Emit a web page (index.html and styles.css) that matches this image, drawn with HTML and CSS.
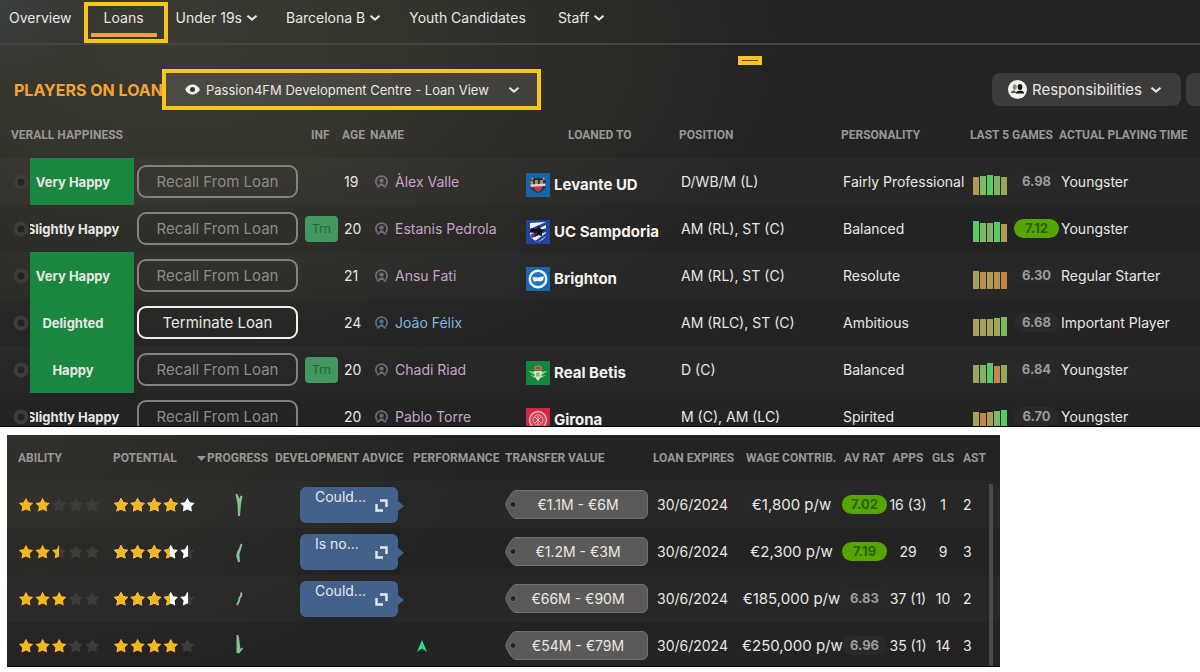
FILE: index.html
```html
<!doctype html>
<html lang="en">
<head>
  <meta charset="utf-8" />
  <meta name="viewport" content="width=device-width,initial-scale=1" />
  <title>Development Centre - Loans</title>
  <link rel="stylesheet" href="styles.css">
</head>
<body>
  <!-- shared icons -->
  <svg class="sprite" aria-hidden="true">
    <symbol id="chevron" viewBox="0 0 12 8"><path d="M1.500 1.800 6 5.600l4.500-3.800" fill="none" stroke="currentColor" stroke-width="2"/></symbol>
    <symbol id="person" viewBox="0 0 13 13"><path d="M2.400 10.500a5.600 5.600 0 1 1 8.200 0" fill="none" stroke="currentColor" stroke-width="1.800"/><circle cx="6.500" cy="5.600" r="2.200" fill="currentColor"/><path d="M1.500 12.500c.3-1.500 1-2 2.300-2.300L5 8.500h3l1.200 1.700c1.300.3 2 .8 2.300 2.300H8.800L8 11H5l-.8 1.500z" fill="currentColor"/></symbol>
    <symbol id="dot" viewBox="0 0 16 16"><circle cx="8" cy="8" r="5.500" fill="#232322" stroke="#3d3c39" stroke-width="4"/></symbol>
    <symbol id="expand" viewBox="0 0 13 13"><path d="M5 1.500h6.500V8M1.500 5v6.500H8" fill="none" stroke="currentColor" stroke-width="2.400"/></symbol>
    <symbol id="tag" viewBox="0 0 143 29"><path d="M11 .5h126a5.500 5.500 0 0 1 5.500 5.500v17a5.500 5.500 0 0 1-5.500 5.500H11C7 28.500 4 22 1.500 17.500q-1.500-3 0-6C4 7 7 .5 11 .5z" fill="#5b5a59" stroke="#737271"/><circle cx="8" cy="14.500" r="3" fill="#242424" stroke="#6e6d6c"/></symbol>
    <clipPath id="five-stars">
      <path d="M8 .8l2.400 4.400 4.800.9-3.400 3.500.7 4.900-4.500-2.100-4.500 2.100.7-4.900L.8 6.100l4.800-.9zM24.600.8l2.400 4.400 4.800.9-3.400 3.500.7 4.900-4.500-2.100-4.500 2.100.7-4.900-3.400-3.500 4.800-.9zM41.200.8l2.400 4.400 4.800.9-3.400 3.500.7 4.900-4.500-2.100-4.500 2.100.7-4.900L34 6.100l4.800-.9zM57.800.8l2.400 4.400 4.800.9-3.400 3.500.7 4.900-4.500-2.100-4.500 2.100.7-4.900-3.400-3.500 4.800-.9zM74.400.8l2.400 4.400 4.800.9-3.400 3.500.7 4.900-4.500-2.100-4.500 2.100.7-4.900-3.400-3.500 4.800-.9z"/>
    </clipPath>
  </svg>

  <section class="panel loans">
    <nav class="tabs">
      <a href="#">Overview</a>
      <a href="#" class="active">Loans</a>
      <a href="#">Under 19s <svg class="chev"><use href="#chevron"/></svg></a>
      <a href="#">Barcelona B <svg class="chev"><use href="#chevron"/></svg></a>
      <a href="#">Youth Candidates</a>
      <a href="#">Staff <svg class="chev"><use href="#chevron"/></svg></a>
    </nav>
    <span class="marker"></span>

    <header class="toolbar">
      <h1>PLAYERS ON LOAN</h1>
      <label class="view">
        <svg class="eye" viewBox="0 0 15 11" role="img" aria-label="View"><path d="M0 5.500C2 2 4.500.5 7.500.5S13 2 15 5.500C13 9 10.500 10.500 7.500 10.500S2 9 0 5.500z" fill="#f2f0ed"/><circle cx="7.500" cy="5.500" r="2.500" fill="#3a3935"/></svg>
        <select>
          <option>Passion4FM Development Centre - Loan View</option>
        </select>
        <svg class="chev bold"><use href="#chevron"/></svg>
      </label>
      <button class="pill-btn" type="button">
        <svg class="staff" viewBox="0 0 19 19"><circle cx="9.500" cy="9.500" r="9.500" fill="#f4f2ef"/><ellipse cx="6.700" cy="7" rx="2" ry="2.800" fill="#8b8987"/><path d="M2.800 13c.3-2 2-2.500 4-2.500l1.500 2.500z" fill="#55534f"/><ellipse cx="12" cy="7" rx="2.300" ry="3" fill="#171716"/><path d="M7.800 13.500c.3-2.200 2-2.700 4.200-2.700s4 .5 4.200 2.700z" fill="#171716"/></svg>
        Responsibilities
        <svg class="chev bold"><use href="#chevron"/></svg>
      </button>
      <button class="pill-btn cut" type="button" aria-label="More"></button>
    </header>

    <table>
      <colgroup>
        <col class="c-dot"><col class="c-happy"><col class="c-action"><col class="c-inf"><col class="c-age"><col class="c-name"><col class="c-club"><col class="c-pos"><col class="c-pers"><col class="c-form"><col class="c-rate"><col>
      </colgroup>
      <thead>
        <tr>
          <th colspan="3" class="first">VERALL HAPPINESS</th>
          <th class="inf">INF</th>
          <th>AGE</th>
          <th>NAME</th>
          <th class="club-head">LOANED TO</th>
          <th>POSITION</th>
          <th>PERSONALITY</th>
          <th colspan="2">LAST 5 GAMES</th>
          <th>ACTUAL PLAYING TIME</th>
        </tr>
      </thead>
      <tbody>
        <tr>
          <td class="dot"><svg><use href="#dot"/></svg></td>
          <td class="happy good"><div>Very Happy</div></td>
          <td class="action"><button type="button" disabled>Recall From Loan</button></td>
          <td></td>
          <td class="age">19</td>
          <td class="name"><a href="#"><svg><use href="#person"/></svg>Àlex Valle</a></td>
          <td class="low"><a href="#" class="club"><svg viewBox="0 0 24 24"><rect width="24" height="24" fill="#1765a8"/><path d="M4 7h16v5c0 4-4 7-8 8-4-1-8-4-8-8z" fill="#25325a"/><path d="M4 8h3v7l-2-2zM9 7h3v5H9zM14 7h3v5h-3z" fill="#b68e3a"/><path d="M7 13h10l-2 4-3 2-3-2z" fill="#c03a42"/><path d="M4.500 11.500l15-1v2.500l-15 .8z" fill="#d8d6d8"/><path d="M7 7l2-2 2 1 1-2 1 2 2-1 2 2z" fill="#222"/><path d="M5 6l2-2v3zM19 6l-2-2v3z" fill="#c99a36"/></svg>Levante UD</a></td>
          <td class="pos">D/WB/M (L)</td>
          <td class="pos">Fairly Professional</td>
          <td class="low"><div class="form"><i class="h18 amber"></i><i class="h19 lime"></i><i class="h20 green"></i><i class="h19 moss"></i><i class="h18 olive"></i></div></td>
          <td><span class="rating">6.98</span></td>
          <td class="time">Youngster</td>
        </tr>
        <tr>
          <td class="dot"><svg><use href="#dot"/></svg></td>
          <td class="happy"><div>Slightly Happy</div></td>
          <td class="action"><button type="button" disabled>Recall From Loan</button></td>
          <td><span class="trn">Trn</span></td>
          <td class="age">20</td>
          <td class="name"><a href="#"><svg><use href="#person"/></svg>Estanis Pedrola</a></td>
          <td class="low"><a href="#" class="club"><svg viewBox="0 0 24 24"><rect width="24" height="24" fill="#24449b"/><path d="M4 3l16-1v12c0 4-4 6-8 8-4-2-8-4-8-8z" fill="#f2f4f8"/><path d="M20 2v3L4 13v-4zM20 8v4L6 18l-2-3zM20 16l-8 6-3-1 11-8z" fill="#24449b"/><path d="M5 8l5 1 3-3 2 3 4 1-3 2v4l-4-1-3 2-1-4-4-1z" fill="#10131c"/><path d="M5 12l6 1v2l-5 1z" fill="#c5303c" opacity=".5"/></svg>UC Sampdoria</a></td>
          <td class="pos">AM (RL), ST (C)</td>
          <td class="pos">Balanced</td>
          <td class="low"><div class="form"><i class="h21 green"></i><i class="h19 lime"></i><i class="h19 moss"></i><i class="h20 green"></i><i class="h18 amber"></i></div></td>
          <td><span class="rating top">7.12</span></td>
          <td class="time">Youngster</td>
        </tr>
        <tr>
          <td class="dot"><svg><use href="#dot"/></svg></td>
          <td class="happy good"><div>Very Happy</div></td>
          <td class="action"><button type="button" disabled>Recall From Loan</button></td>
          <td></td>
          <td class="age">21</td>
          <td class="name"><a href="#"><svg><use href="#person"/></svg>Ansu Fati</a></td>
          <td class="low"><a href="#" class="club"><svg viewBox="0 0 24 24"><rect width="24" height="24" fill="#1b67b1"/><circle cx="12" cy="12" r="8.300" fill="#2472b8" stroke="#eef5fb" stroke-width="2.400"/><path d="M6 11c2-1.500 3.500-1 5-.5 2 .5 3-1.500 7-1l-1 3.500c-2 2-4 1.500-5 1l-4 .5c-1-.5 0-2-2-3.500z" fill="#f5f9fc"/></svg>Brighton</a></td>
          <td class="pos">AM (RL), ST (C)</td>
          <td class="pos">Resolute</td>
          <td class="low"><div class="form"><i class="h18 khaki"></i><i class="h17 orange"></i><i class="h17 amber"></i><i class="h17 orange"></i><i class="h17 rust"></i></div></td>
          <td><span class="rating">6.30</span></td>
          <td class="time">Regular Starter</td>
        </tr>
        <tr>
          <td class="dot"><svg><use href="#dot"/></svg></td>
          <td class="happy good"><div>Delighted</div></td>
          <td class="action"><button type="button">Terminate Loan</button></td>
          <td></td>
          <td class="age">24</td>
          <td class="name loanee"><a href="#"><svg><use href="#person"/></svg>João Félix</a></td>
          <td></td>
          <td class="pos">AM (RLC), ST (C)</td>
          <td class="pos">Ambitious</td>
          <td class="low"><div class="form"><i class="h17 khaki"></i><i class="h17 khaki"></i><i class="h17 khaki"></i><i class="h18 olive"></i><i class="h19 lime"></i></div></td>
          <td><span class="rating">6.68</span></td>
          <td class="time">Important Player</td>
        </tr>
        <tr>
          <td class="dot"><svg><use href="#dot"/></svg></td>
          <td class="happy good"><div>Happy</div></td>
          <td class="action"><button type="button" disabled>Recall From Loan</button></td>
          <td><span class="trn">Trn</span></td>
          <td class="age">20</td>
          <td class="name"><a href="#"><svg><use href="#person"/></svg>Chadi Riad</a></td>
          <td class="low"><a href="#" class="club"><svg viewBox="0 0 24 24"><rect width="24" height="24" fill="#13873f"/><path d="M2 10l7 1v3zM22 10l-7 1v3zM4 14l6 1-1 2zM20 14l-6 1 1 2z" fill="#a5cc8d"/><path d="M8 10h8l-1 6-3 4-3-4z" fill="#dfe8c8"/><path d="M10.500 11.500h1v4h-1zM12.500 11.500h1v4h-1z" fill="#2b8a48"/><path d="M8.500 9L8 6l2-1.500h4L16 6l-.5 3z" fill="#a4853a"/><path d="M10 6h4v2h-4z" fill="#b0433a"/></svg>Real Betis</a></td>
          <td class="pos">D (C)</td>
          <td class="pos">Balanced</td>
          <td class="low"><div class="form"><i class="h18 olive"></i><i class="h18 moss"></i><i class="h20 green"></i><i class="h17 rust"></i><i class="h18 olive"></i></div></td>
          <td><span class="rating">6.84</span></td>
          <td class="time">Youngster</td>
        </tr>
        <tr>
          <td class="dot"><svg><use href="#dot"/></svg></td>
          <td class="happy"><div>Slightly Happy</div></td>
          <td class="action"><button type="button" disabled>Recall From Loan</button></td>
          <td></td>
          <td class="age">20</td>
          <td class="name"><a href="#"><svg><use href="#person"/></svg>Pablo Torre</a></td>
          <td class="low"><a href="#" class="club"><svg viewBox="0 0 24 24"><rect width="24" height="24" fill="#cf2745"/><circle cx="12" cy="12" r="8.500" fill="#d8415a" stroke="#efb4b8" stroke-width="1.500"/><circle cx="12" cy="12" r="5" fill="#d03a52" stroke="#eaa2a8"/><path d="M9 9l6 6M12 8v8M15 9l-6 6" stroke="#f0c0c0"/></svg>Girona</a></td>
          <td class="pos">M (C), AM (LC)</td>
          <td class="pos">Spirited</td>
          <td class="low"><div class="form"><i class="h18 khaki"></i><i class="h17 rust"></i><i class="h18 amber"></i><i class="h19 lime"></i><i class="h20 green"></i></div></td>
          <td><span class="rating">6.70</span></td>
          <td class="time">Youngster</td>
        </tr>
      </tbody>
    </table>
  </section>

  <section class="panel details">
    <table>
      <colgroup>
        <col class="d-star"><col class="d-star"><col class="d-prog"><col class="d-advice"><col class="d-perf"><col class="d-value"><col class="d-exp"><col class="d-wage"><col class="d-rate"><col class="d-apps"><col class="d-gls"><col>
      </colgroup>
      <thead>
        <tr>
          <th class="first">ABILITY</th>
          <th class="first">POTENTIAL</th>
          <th><svg class="sort" viewBox="0 0 9 5"><path d="M0 0h9L4.500 5z" fill="currentColor"/></svg>PROGRESS</th>
          <th>DEVELOPMENT ADVICE</th>
          <th>PERFORMANCE</th>
          <th>TRANSFER VALUE</th>
          <th>LOAN EXPIRES</th>
          <th class="wage-head">WAGE CONTRIB.</th>
          <th class="center">AV RAT</th>
          <th class="center">APPS</th>
          <th class="center">GLS</th>
          <th class="ast">AST</th>
        </tr>
      </thead>
      <tbody>
        <tr>
          <td class="first"><svg class="stars" viewBox="0 0 83 16" role="img" aria-label="2 stars"><g clip-path="url(#five-stars)"><rect width="83" height="16" fill="#3c3c3b"/><rect width="33" height="16" fill="#f4b81d"/></g></svg></td>
          <td class="first"><svg class="stars" viewBox="0 0 83 16" role="img" aria-label="4 to 5 stars"><g clip-path="url(#five-stars)"><rect width="83" height="16" fill="#fff"/><rect width="66" height="16" fill="#f4b81d"/></g></svg></td>
          <td class="prog"><svg class="spark" viewBox="0 0 8 26"><path d="M1.500 2l2 10 .5 12 1-12 1.500-8L4 10 2.500 4"/></svg></td>
          <td><button type="button" class="advice">Could...<svg><use href="#expand"/></svg></button></td>
          <td></td>
          <td><span class="value"><svg><use href="#tag"/></svg><b>€1.1M - €6M</b></span></td>
          <td class="exp">30/6/2024</td>
          <td class="wage">€1,800 p/w</td>
          <td><span class="rating top">7.02</span></td>
          <td class="center">16 (3)</td>
          <td class="center">1</td>
          <td class="ast">2</td>
        </tr>
        <tr>
          <td class="first"><svg class="stars" viewBox="0 0 83 16" role="img" aria-label="2.5 stars"><g clip-path="url(#five-stars)"><rect width="83" height="16" fill="#3c3c3b"/><rect width="41" height="16" fill="#f4b81d"/></g></svg></td>
          <td class="first"><svg class="stars" viewBox="0 0 83 16" role="img" aria-label="3.5 to 4.5 stars"><g clip-path="url(#five-stars)"><rect width="83" height="16" fill="#3c3c3b"/><rect width="75" height="16" fill="#fff"/><rect width="57" height="16" fill="#f4b81d"/></g></svg></td>
          <td class="prog"><svg class="spark" viewBox="0 0 8 26"><path d="M6.500 5L5 9.500 3 13l-.8 4L4 23l-.5-8z"/></svg></td>
          <td><button type="button" class="advice">Is no...<svg><use href="#expand"/></svg></button></td>
          <td></td>
          <td><span class="value"><svg><use href="#tag"/></svg><b>€1.2M - €3M</b></span></td>
          <td class="exp">30/6/2024</td>
          <td class="wage">€2,300 p/w</td>
          <td><span class="rating top">7.19</span></td>
          <td class="center">29</td>
          <td class="center">9</td>
          <td class="ast">3</td>
        </tr>
        <tr>
          <td class="first"><svg class="stars" viewBox="0 0 83 16" role="img" aria-label="3 stars"><g clip-path="url(#five-stars)"><rect width="83" height="16" fill="#3c3c3b"/><rect width="49" height="16" fill="#f4b81d"/></g></svg></td>
          <td class="first"><svg class="stars" viewBox="0 0 83 16" role="img" aria-label="3.5 to 4.5 stars"><g clip-path="url(#five-stars)"><rect width="83" height="16" fill="#3c3c3b"/><rect width="75" height="16" fill="#fff"/><rect width="57" height="16" fill="#f4b81d"/></g></svg></td>
          <td class="prog"><svg class="spark" viewBox="0 0 8 26"><path d="M6.500 6.500L6 10l-1.500 2L4 15l-2 4"/></svg></td>
          <td><button type="button" class="advice">Could...<svg><use href="#expand"/></svg></button></td>
          <td></td>
          <td><span class="value"><svg><use href="#tag"/></svg><b>€66M - €90M</b></span></td>
          <td class="exp">30/6/2024</td>
          <td class="wage">€185,000 p/w</td>
          <td><span class="rating">6.83</span></td>
          <td class="center">37 (1)</td>
          <td class="center">10</td>
          <td class="ast">2</td>
        </tr>
        <tr>
          <td class="first"><svg class="stars" viewBox="0 0 83 16" role="img" aria-label="3 stars"><g clip-path="url(#five-stars)"><rect width="83" height="16" fill="#3c3c3b"/><rect width="49" height="16" fill="#f4b81d"/></g></svg></td>
          <td class="first"><svg class="stars" viewBox="0 0 83 16" role="img" aria-label="4 stars"><g clip-path="url(#five-stars)"><rect width="83" height="16" fill="#3c3c3b"/><rect width="66" height="16" fill="#f4b81d"/></g></svg></td>
          <td class="prog"><svg class="spark" viewBox="0 0 8 26"><path d="M2.500 2v18l1-8L3 4l1.500 13L6 16.500 3 20"/></svg></td>
          <td></td>
          <td class="perf"><svg viewBox="0 0 10 12"><path d="M5 0l5 12-5-3.500L0 12z" fill="#1fe27c"/></svg></td>
          <td><span class="value"><svg><use href="#tag"/></svg><b>€54M - €79M</b></span></td>
          <td class="exp">30/6/2024</td>
          <td class="wage">€250,000 p/w</td>
          <td><span class="rating">6.96</span></td>
          <td class="center">35 (1)</td>
          <td class="center">14</td>
          <td class="ast">3</td>
        </tr>
      </tbody>
    </table>
    <span class="scrollbar"></span>
  </section>
</body>
</html>
```
FILE: styles.css
```css
:root{
  --text:#e9e7e4; --muted:#989795; --yellow:#f8c51f; --green:#1a863f;
  font-family:Inter, "Liberation Sans", sans-serif;
}
*,*::before,*::after{box-sizing:border-box}
body{margin:0;background:#fff;color:var(--text);font-size:14px;line-height:20px}
a{color:inherit;text-decoration:none}
button,select{font:inherit;color:inherit}
svg{display:block}
.sprite{position:absolute;width:0;height:0}

.panel{position:relative;overflow:hidden;background:#232323;border-bottom:1px solid #000}
.loans{max-height:427px;background:radial-gradient(ellipse 90px 90px at 0 0, #3a3f40 0%, transparent 100%),radial-gradient(ellipse 600px 340px at 170px 40px, #3b3a32 0%, #34332c 40%, #232323 100%)}
.details{margin:8px 200px 0 7px;max-height:232px;background:radial-gradient(ellipse 420px 240px at 30px 0, #31302b 0%, #232323 100%)}

/* tabs */
.tabs{display:flex;gap:32px;height:45px;padding:8px 9px 0;border-bottom:2px solid #454543}
.tabs a{position:relative;display:flex;align-items:center;gap:4px;height:20px;white-space:nowrap}
.tabs .chev{margin-right:-4px}
.chev{width:12px;height:8px}
.tabs .active::before{content:"";position:absolute;left:-20px;right:-24px;top:-6px;height:41px;border:4px solid var(--yellow)}
.tabs .active::after{content:"";position:absolute;left:-13px;right:-13px;top:25px;height:4px;background:#eda345}
.marker{position:absolute;left:738px;top:56px;width:24px;height:9px;border:4px solid var(--yellow);background:#5e4c12}

/* toolbar */
.toolbar{display:flex;align-items:center;height:45px;margin-top:22px;padding-left:14px}
.toolbar h1{width:148px;margin:0;color:#f5a333;font-size:16px;line-height:20px;white-space:nowrap}
.view{position:relative;display:flex;align-items:center;height:41px;padding:0 17px 0 19px;border:4px solid var(--yellow);background:linear-gradient(90deg,#4b4a43,#403f3c)}
.view select{appearance:none;width:308px;padding:0 0 0 6px;border:0;background:none;font-size:13px;white-space:nowrap}
.eye{width:15px;height:11px}
.pill-btn{display:flex;align-items:center;gap:5px;height:33px;margin-left:auto;padding:0 19px 0 16px;border:0;border-radius:8px;background:#3d3c3b;font-size:15px}
.pill-btn .chev{margin-left:3px}
.pill-btn.cut{width:14px;margin-left:5px;padding:0;border-radius:8px 0 0 8px}
.staff{width:19px;height:19px}

/* tables */
table{width:100%;table-layout:fixed;border-collapse:collapse}
th,td{padding:0;text-align:left;white-space:nowrap}
th{height:46px;color:var(--muted);font:700 12px/16px Roboto, "Liberation Sans", sans-serif}
td{height:47px}
tbody tr:nth-child(odd){background:rgba(255,255,255,.018)}
.first{padding-left:11px}
.center{text-align:center}

.c-dot{width:30px}.c-happy{width:104px}.c-action{width:167px}.c-inf{width:41px}.c-age{width:28px}.c-name{width:156px}
.c-club{width:153px}.c-pos{width:162px}.c-pers{width:129px}.c-form{width:43px}.c-rate{width:46px}
.inf{padding-left:10px}
.club-head{padding-left:42px}
.dot svg{width:16px;height:16px;margin-left:13px}
.happy{font-size:13px;font-weight:700}
.happy div{display:flex;justify-content:center;overflow:hidden;padding-right:18px}
.good{background:var(--green)}
.action{padding-left:3px}
.action button{width:161px;height:33px;padding:0;border:2px solid #f2f0ed;border-radius:9px;background:none;font-size:15px}
.action button:disabled{border-color:#84827f;color:#8d8b88}
.trn{display:block;width:33px;height:26px;margin-left:4px;border-radius:4px;background:#43985f;color:#24633b;font-size:12px;line-height:26px;text-align:center}
.age{padding-left:2px}
.name{padding-left:5px;color:#c5a3c9}
.name a{display:flex;align-items:center;gap:7px}
.name svg{width:13px;height:13px;opacity:.5}
.loanee{color:#7db8e0}
.low{padding-top:6px}
.club{display:flex;align-items:center;gap:4px;color:#f4f2ef;font-size:15px;font-weight:700}
.club svg{width:24px;height:24px}
.pos{padding-left:2px}
.form{display:flex;align-items:flex-end;gap:1px;height:21px;padding-left:3px}
.form i{width:6px}
.h17{height:17px}.h18{height:18px}.h19{height:19px}.h20{height:20px}.h21{height:21px}
.green{background:#5ac965}.lime{background:#7cba60}.moss{background:#84b061}.olive{background:#98a85a}
.khaki{background:#a6a158}.amber{background:#b09a56}.orange{background:#b98f50}.rust{background:#c2854e}
.rating{display:block;width:45px;height:19px;margin-left:1px;border-radius:10px;background:#292929;color:#9b9a99;font-size:13px;font-weight:700;line-height:19px;text-align:center}
.rating.top{background:#57a503;color:#2b5f08}
.time{padding-left:2px}

.d-star{width:95px}.d-prog{width:78px}.d-advice{width:138px}.d-perf{width:92px}.d-value{width:148px}.d-exp{width:89px}
.d-wage{width:99px}.d-rate{width:47px}.d-apps{width:40px}.d-gls{width:30px}
.sort{display:inline-block;width:9px;height:5px;margin-right:1px;vertical-align:middle}
.stars{width:83px;height:16px}
.prog{padding-left:38px}
.spark{width:8px;height:26px;fill:none;stroke:#83bf93;stroke-width:2}
.advice{position:relative;display:flex;align-items:flex-start;justify-content:space-between;width:98px;height:36px;margin-left:25px;padding:0 10px 0 15px;border:0;border-radius:6px;background:#42628c}
.advice svg{width:13px;height:13px;margin-top:12px}
.advice::after{content:"";position:absolute;left:98px;top:14px;border:5px solid transparent;border-left:6px solid #42628c;border-right:0}
.perf svg{width:10px;height:12px;margin-left:4px}
.value{display:grid;width:143px;align-items:center}
.value svg,.value b{grid-area:1/1}
.value svg{width:143px;height:29px}
.value b{padding-left:3px;font-weight:400;text-align:center}
.exp{padding-left:4px}
.wage{font-size:15px;text-align:center}
.wage-head{padding-left:4px}
.ast{padding-left:5px}
.scrollbar{position:absolute;right:7px;top:49px;bottom:0;width:4px;background:#4a4a4a}
```
